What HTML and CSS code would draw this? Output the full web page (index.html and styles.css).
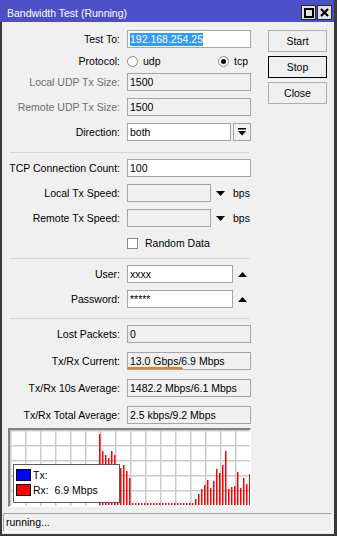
FILE: index.html
```html
<!DOCTYPE html>
<html lang="en">
<head>
    <link rel="stylesheet" href="styles.css">
</head>
<body>
<div class="window">
    <div class="titlebar">
        <span class="title">Bandwidth Test (Running)</span>
        <div class="title-btns">
            <span class="tbtn"><svg width="10" height="10" viewBox="0 0 10 10"><rect x="1" y="1" width="8" height="8" fill="none" stroke="#000" stroke-width="2"/></svg></span>
            <span class="tbtn"><svg width="9" height="9" viewBox="0 0 9 9"><path d="M1 1L8 8M8 1L1 8" stroke="#000" stroke-width="2.2"/></svg></span>
        </div>
    </div>

    <div class="content">
        <div class="panel">
            <div class="main">
                <div class="form">
                    <!-- test target -->
                    <div class="section">
                        <div class="row"><label>Test To:</label><div class="field"><span class="sel">192.168.254.25</span></div></div>
                        <div class="row short">
                            <label>Protocol:</label>
                            <div class="radios">
                                <span class="opt"><span class="radio"></span>udp</span>
                                <span class="opt"><span class="radio on"></span>tcp</span>
                            </div>
                        </div>
                        <div class="row"><label class="dim">Local UDP Tx Size:</label><div class="field ro">1500</div></div>
                        <div class="row"><label class="dim">Remote UDP Tx Size:</label><div class="field ro">1500</div></div>
                        <div class="row">
                            <label>Direction:</label>
                            <div class="combo">
                                <div class="field">both</div>
                                <span class="drop"><svg width="8" height="8" viewBox="0 0 8 8"><rect x="0" y="0" width="8" height="1.5"/><polygon points="0,3 8,3 4,7.5"/></svg></span>
                            </div>
                        </div>
                    </div>
                    <div class="sep"></div>

                    <!-- tcp / speed -->
                    <div class="section">
                        <div class="row"><label>TCP Connection Count:</label><div class="field">100</div></div>
                        <div class="row">
                            <label>Local Tx Speed:</label>
                            <div class="speed">
                                <div class="field ro"></div>
                                <svg class="tri" width="9" height="5" viewBox="0 0 9 5"><polygon points="0,0 9,0 4.5,5"/></svg>
                                <span class="unit">bps</span>
                            </div>
                        </div>
                        <div class="row">
                            <label>Remote Tx Speed:</label>
                            <div class="speed">
                                <div class="field ro"></div>
                                <svg class="tri" width="9" height="5" viewBox="0 0 9 5"><polygon points="0,0 9,0 4.5,5"/></svg>
                                <span class="unit">bps</span>
                            </div>
                        </div>
                        <div class="row">
                            <label></label>
                            <span class="check"><span class="box"></span>Random Data</span>
                        </div>
                    </div>
                    <div class="sep b"></div>

                    <!-- auth -->
                    <div class="section">
                        <div class="row">
                            <label>User:</label>
                            <div class="auth">
                                <div class="field">xxxx</div>
                                <svg class="tri" width="9" height="5" viewBox="0 0 9 5"><polygon points="0,5 9,5 4.5,0"/></svg>
                            </div>
                        </div>
                        <div class="row">
                            <label>Password:</label>
                            <div class="auth">
                                <div class="field">*****</div>
                                <svg class="tri" width="9" height="5" viewBox="0 0 9 5"><polygon points="0,5 9,5 4.5,0"/></svg>
                            </div>
                        </div>
                    </div>
                    <div class="sep c"></div>

                    <!-- results -->
                    <div class="section wide">
                        <div class="row"><label>Lost Packets:</label><div class="field ro">0</div></div>
                        <div class="row"><label>Tx/Rx Current:</label><div class="field ro">13.0 Gbps/6.9 Mbps<span class="mark"></span></div></div>
                        <div class="row"><label>Tx/Rx 10s Average:</label><div class="field ro">1482.2 Mbps/6.1 Mbps</div></div>
                        <div class="row"><label>Tx/Rx Total Average:</label><div class="field ro">2.5 kbps/9.2 Mbps</div></div>
                    </div>
                </div>

                <div class="side">
                    <button class="btn">Start</button>
                    <button class="btn default">Stop</button>
                    <button class="btn">Close</button>
                </div>
            </div>

            <div class="graph">
                <svg width="240" height="76" viewBox="0 0 240 76">
                    <g stroke="#cbcbcb" stroke-width="1.5">
                        <path d="M0.75 0V76M15.75 0V76M30.75 0V76M45.75 0V76M60.75 0V76M75.75 0V76M90.75 0V76M105.75 0V76M120.75 0V76M135.75 0V76M150.75 0V76M165.75 0V76M180.75 0V76M195.75 0V76M210.75 0V76M225.75 0V76"/>
                        <path d="M0 0.75H240M0 15.75H240M0 30.75H240M0 45.75H240M0 60.75H240"/>
                    </g>
                    <g fill="#f00">
                        <rect x="89" y="4" width="1.5" height="71"/>
                        <rect x="92" y="21" width="1.5" height="54"/>
                        <rect x="95" y="25" width="1.5" height="50"/>
                        <rect x="98" y="28" width="1.5" height="47"/>
                        <rect x="101" y="21" width="1.5" height="54"/>
                        <rect x="104" y="25" width="1.5" height="50"/>
                        <rect x="107" y="36" width="1.5" height="39"/>
                        <rect x="110" y="38" width="1.5" height="37"/>
                        <rect x="113" y="35" width="1.5" height="40"/>
                        <rect x="116" y="41" width="1.5" height="34"/>
                        <rect x="119" y="48" width="1.5" height="27"/>
                        <rect x="122" y="73" width="1.5" height="2"/>
                        <rect x="125" y="73" width="1.5" height="2"/>
                        <rect x="128" y="73" width="1.5" height="2"/>
                        <rect x="131" y="73" width="1.5" height="2"/>
                        <rect x="134" y="73" width="1.5" height="2"/>
                        <rect x="137" y="73" width="1.5" height="2"/>
                        <rect x="140" y="73" width="1.5" height="2"/>
                        <rect x="143" y="73" width="1.5" height="2"/>
                        <rect x="146" y="73" width="1.5" height="2"/>
                        <rect x="149" y="73" width="1.5" height="2"/>
                        <rect x="152" y="73" width="1.5" height="2"/>
                        <rect x="155" y="73" width="1.5" height="2"/>
                        <rect x="158" y="73" width="1.5" height="2"/>
                        <rect x="161" y="73" width="1.5" height="2"/>
                        <rect x="164" y="73" width="1.5" height="2"/>
                        <rect x="167" y="73" width="1.5" height="2"/>
                        <rect x="170" y="73" width="1.5" height="2"/>
                        <rect x="173" y="73" width="1.5" height="2"/>
                        <rect x="176" y="73" width="1.5" height="2"/>
                        <rect x="179" y="73" width="1.5" height="2"/>
                        <rect x="182" y="73" width="1.5" height="2"/>
                        <rect x="185" y="69" width="1.5" height="6"/>
                        <rect x="188" y="64" width="1.5" height="11"/>
                        <rect x="191" y="59" width="1.5" height="16"/>
                        <rect x="194" y="55" width="1.5" height="20"/>
                        <rect x="197" y="50" width="1.5" height="25"/>
                        <rect x="200" y="58" width="1.5" height="17"/>
                        <rect x="203" y="51" width="1.5" height="24"/>
                        <rect x="206" y="39" width="1.5" height="36"/>
                        <rect x="209" y="43" width="1.5" height="32"/>
                        <rect x="212" y="35" width="1.5" height="40"/>
                        <rect x="215" y="21" width="1.5" height="54"/>
                        <rect x="218" y="59" width="1.5" height="16"/>
                        <rect x="221" y="57" width="1.5" height="18"/>
                        <rect x="224" y="56" width="1.5" height="19"/>
                        <rect x="227" y="42" width="1.5" height="33"/>
                        <rect x="230" y="58" width="1.5" height="17"/>
                        <rect x="233" y="48" width="1.5" height="27"/>
                        <rect x="236" y="54" width="1.5" height="21"/>
                        <rect x="239" y="44" width="1.5" height="31"/>
                    </g>
                </svg>
                <div class="legend">
                    <div class="key"><span class="swatch tx"></span>Tx:</div>
                    <div class="key"><span class="swatch rx"></span>Rx:&nbsp; 6.9 Mbps</div>
                </div>
            </div>
        </div>

        <div class="status">running...</div>
    </div>
</div>
</body>
</html>
```

FILE: styles.css
```css
* {
    box-sizing: border-box;
}

body {
    margin: 0;
    background-color: #f0f0f0;
    font-family: "Liberation Sans", Arial, sans-serif;
    font-size: 10.5px;
    color: #000;
    overflow: hidden;
}

.window {
    width: 337px;
    height: 536px;
    display: flex;
    flex-direction: column;
    border-right: 3px solid #3a3a3a;
}

/* title bar */
.titlebar {
    height: 22px;
    background-color: #4d4fc8;
    color: #fff;
    display: flex;
    align-items: center;
    justify-content: space-between;
    padding: 3px 2px 0 7px;
}

.title-btns {
    display: flex;
    gap: 1px;
}

.tbtn {
    width: 15px;
    height: 15px;
    background-color: #e1e1e1;
    border: 1px solid #262626;
    display: flex;
    align-items: center;
    justify-content: center;
}

.content {
    flex: 1;
    display: flex;
    flex-direction: column;
    border-left: 2px solid #3a3a3a;
    border-bottom: 2px solid #3a3a3a;
}

.panel {
    padding: 8px 0 0 6px;
}

.main {
    display: flex;
    gap: 17px;
}

.form {
    width: 243px;
}

.section {
    display: flex;
    flex-direction: column;
    gap: 7px;
}

.section.wide {
    gap: 9px;
}

.row {
    display: grid;
    grid-template-columns: 112px 124px;
    column-gap: 7px;
    height: 18px;
    align-items: center;
}

.row.short {
    height: 11px;
}

.row label {
    text-align: right;
    white-space: nowrap;
}

.row label.dim {
    color: #6d6d6d;
}

.field {
    height: 18px;
    border: 1px solid #a5a5a5;
    background-color: #fff;
    padding: 0 2px;
    line-height: 16px;
    white-space: nowrap;
    overflow: hidden;
    position: relative;
}

.field.ro {
    background-color: #f0f0f0;
}

.sel {
    display: inline-block;
    background-color: #3399ff;
    color: #fff;
    line-height: 13px;
}

/* orange marker under the current rate */
.mark {
    position: absolute;
    left: -1px;
    top: 14px;
    width: 56px;
    height: 3px;
    border-radius: 2px;
    background-color: #f47a20;
}

.radios {
    display: grid;
    grid-template-columns: 91px auto;
}

.opt {
    display: flex;
    align-items: center;
    gap: 5px;
}

.radio {
    width: 11px;
    height: 11px;
    border-radius: 50%;
    border: 1px solid #8a8a8a;
    background-color: #fff;
    position: relative;
}

.radio.on::after {
    content: "";
    position: absolute;
    left: 2px;
    top: 2px;
    width: 5px;
    height: 5px;
    border-radius: 50%;
    background-color: #000;
}

.combo {
    display: flex;
    gap: 2px;
}

.combo .field {
    width: 104px;
}

.drop {
    width: 18px;
    height: 18px;
    border: 1px solid #a5a5a5;
    background-color: #f0f0f0;
    display: flex;
    align-items: center;
    justify-content: center;
}

.speed,
.auth {
    display: flex;
    align-items: center;
}

.speed .field {
    width: 84px;
}

.auth .field {
    width: 106px;
}

.tri {
    margin-left: 5px;
}

.unit {
    margin-left: 8px;
}

.check {
    display: flex;
    align-items: center;
    gap: 7px;
}

.box {
    width: 11px;
    height: 11px;
    border: 1px solid #8a8a8a;
    background-color: #fff;
}

.sep {
    width: 240px;
    height: 1px;
    background-color: #d6d6d6;
    margin: 11px 0 6px 2px;
}

.sep.b {
    margin-top: 6px;
}

.sep.c {
    margin-top: 10px;
}

/* buttons */
.side {
    width: 59px;
    display: flex;
    flex-direction: column;
    gap: 4px;
}

.btn {
    height: 22px;
    padding: 0;
    border: 1px solid #adadad;
    background-color: #efefef;
    font-family: inherit;
    font-size: 10.5px;
    color: #000;
}

.btn.default {
    border-color: #000;
}

/* graph */
.graph {
    margin-top: 4px;
    width: 243px;
    height: 79px;
    border-top: 2px solid #828282;
    border-left: 2px solid #828282;
    border-right: 1px solid #fff;
    border-bottom: 1px solid #fff;
    background-color: #fff;
    position: relative;
}

.graph svg {
    display: block;
}

.legend {
    position: absolute;
    left: 3px;
    top: 34px;
    width: 107px;
    height: 39px;
    background-color: #fff;
    border: 1px solid #5a5a5a;
    padding: 4px 0 0 2px;
    display: flex;
    flex-direction: column;
    gap: 3px;
}

.key {
    display: flex;
    align-items: center;
    gap: 2px;
    height: 12px;
}

.swatch {
    width: 15px;
    height: 12px;
    border: 1px solid #000;
}

.swatch.tx {
    background-color: #0000ff;
}

.swatch.rx {
    background-color: #ff0000;
}

.status {
    margin: 6px 2px 0 1px;
    height: 19px;
    border-top: 1px solid #a0a0a0;
    border-left: 1px solid #a0a0a0;
    border-right: 1px solid #fff;
    border-bottom: 1px solid #fff;
    padding-left: 2px;
    line-height: 17px;
}
```
